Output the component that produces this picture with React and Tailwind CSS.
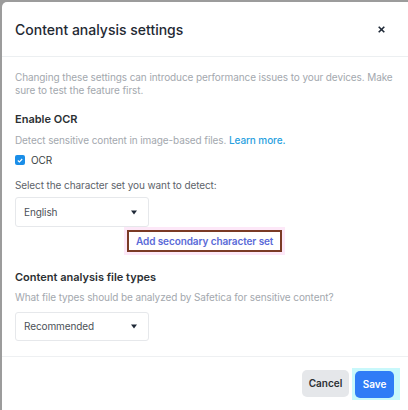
import React from "react";

function Select({ label, h }) {
  return (
    <div className={`flex ${h} w-[134px] items-center justify-between rounded-[3px] border border-[#e6e8eb] bg-white pl-[8px] pr-[11px] text-[10px] text-[#4b5157]`}>
      <span>{label}</span>
      <svg width="6" height="5" viewBox="0 0 6 5"><path d="M0 0.5 L6 0.5 L3 4.5 Z" fill="#1f2937" /></svg>
    </div>
  );
}

export default function App() {
  return (
    <div className="h-[410px] w-[408px] bg-[#9c9c9c] pl-[2px] pt-[2px]" style={{ fontFamily: "Inter, 'Noto Sans', sans-serif" }}>
      <div className="flex h-[408px] w-[406px] flex-col rounded-tl-[5px] bg-white">
        <div className="flex h-[55px] items-center justify-between border-b border-[#eceff1] pl-[13px] pr-[23px]">
          <span className="text-[14px] font-medium text-[#1f2933]">Content analysis settings</span>
          <svg width="7" height="7" viewBox="0 0 7 7"><path d="M0.7 0.7 L6.3 6.3 M6.3 0.7 L0.7 6.3" stroke="#1f2937" strokeWidth="1.6" /></svg>
        </div>
        <div className="flex flex-col pl-[13px] pr-[6px] pt-[14px] tracking-[-0.1px]">
          <p className="text-[10px] leading-[13px] text-[#a3a8ae]">
            Changing these settings can introduce performance issues to your devices. Make sure to test the feature first.
          </p>
          <div className="mt-[15px] text-[11px] font-semibold leading-[14px] tracking-normal text-[#2b2f33]">Enable OCR</div>
          <div className="mt-[7px] text-[10px] leading-[14px] text-[#a3a8ae]">
            Detect sensitive content in image-based files. <span className="font-medium text-[#29a1e0]">Learn more.</span>
          </div>
          <div className="mt-[8px] flex h-[10px] items-center gap-[6px]">
            <span className="flex h-[10px] w-[10px] items-center justify-center rounded-[2px] bg-[#1a8ee8]">
              <svg width="6" height="5" viewBox="0 0 6 5"><path d="M0.8 2.5 L2.4 3.9 L5.2 1" stroke="white" strokeWidth="1.1" fill="none" /></svg>
            </span>
            <span className="text-[10px] text-[#3a3f44]">OCR</span>
          </div>
          <div className="mt-[13px] text-[10px] leading-[14px] text-[#5d636a]">Select the character set you want to detect:</div>
          <div className="mt-[5px]">
            <Select label="English" h="h-[30px]" />
          </div>
          <div className="ml-[109px] mt-0 w-fit bg-[#fde8f8] px-[3px] py-[3px]">
            <div className="border-2 border-[#7a3a25] bg-white px-[7px] text-[10px] font-semibold leading-[18px] text-[#5a6bd8]">
              Add secondary character set
            </div>
          </div>
          <div className="mt-[15px] text-[11px] font-semibold leading-[14px] tracking-normal text-[#2b2f33]">Content analysis file types</div>
          <div className="mt-[6px] text-[10px] leading-[14px] text-[#a3a8ae]">What file types should be analyzed by Safetica for sensitive content?</div>
          <div className="mt-[8px]">
            <Select label="Recommended" h="h-[29px]" />
          </div>
        </div>
        <div className="mt-[15px] flex flex-1 items-start justify-end gap-[3px] border-t border-[#eef0f2] pr-[8px] pt-[11px]">
          <button className="mt-[2px] h-[27px] w-[47px] rounded-[5px] bg-[#e5e7ea] text-[10px] font-semibold text-[#2b2f33]">Cancel</button>
          <div className="bg-[#c8f8fb] py-[2px] pl-[3px] pr-[6px]">
            <button className="h-[27px] w-[39px] rounded-[5px] bg-[#2f7cf6] text-[10px] font-semibold text-white">Save</button>
          </div>
        </div>
      </div>
    </div>
  );
}
